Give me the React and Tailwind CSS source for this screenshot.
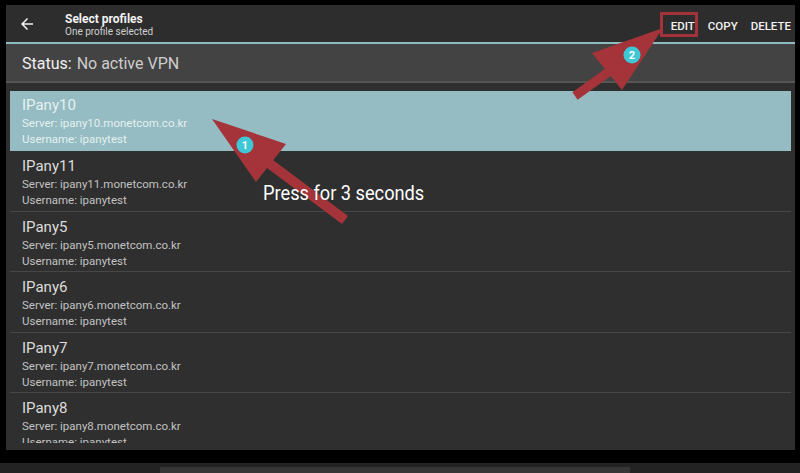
import React from "react";

const items = [
  { name: "IPany10", server: "ipany10.monetcom.co.kr", selected: true },
  { name: "IPany11", server: "ipany11.monetcom.co.kr" },
  { name: "IPany5", server: "ipany5.monetcom.co.kr" },
  { name: "IPany6", server: "ipany6.monetcom.co.kr" },
  { name: "IPany7", server: "ipany7.monetcom.co.kr" },
  { name: "IPany8", server: "ipany8.monetcom.co.kr" },
];

function Item({ it, last }) {
  if (it.selected) {
    return (
      <div className="h-[60px] mx-[4px] bg-[#94bcc2] pl-[12px] pt-[5px] text-[#e6f0f1]">
        <div className="text-[15px] leading-[18px]">{it.name}</div>
        <div className="text-[11.5px] leading-[16px] mt-[1px]">Server: {it.server}</div>
        <div className="text-[11.5px] leading-[16px]">Username: ipanytest</div>
      </div>
    );
  }
  return (
    <div className={"h-[60.5px] mx-[4px] pl-[12px] pt-[6px] " + (last ? "" : "border-b border-[#474747]")}>
      <div className="text-[15px] leading-[18px] text-[#dcdcdc]">{it.name}</div>
      <div className="text-[11.5px] leading-[16px] mt-[1px] text-[#c2c2c2]">Server: {it.server}</div>
      <div className="text-[11.5px] leading-[16px] text-[#c2c2c2]">Username: ipanytest</div>
    </div>
  );
}

export default function App() {
  return (
    <div className="relative w-[800px] h-[473px] bg-black overflow-hidden" style={{ fontFamily: "Roboto, 'Noto Sans', sans-serif" }}>
      <div className="pt-[5px] pl-[6px]">
        <div className="w-[789px] h-[445px] flex flex-col overflow-hidden bg-[#2f2f2f]">
          {/* top bar */}
          <div className="h-[37px] bg-[#2d2d2d] flex items-center shrink-0">
            <svg width="18" height="18" viewBox="0 0 24 24" className="ml-[12px] mt-[1px]" fill="#f2f2f2">
              <path d="M20 11H7.83l5.59-5.59L12 4l-8 8 8 8 1.41-1.41L7.83 13H20v-2z" />
            </svg>
            <div className="ml-[29px] flex flex-col mt-[3px]">
              <span className="text-[12px] leading-[14px] font-bold text-[#f2f2f2]">Select profiles</span>
              <span className="text-[10px] leading-[12px] text-[#cfcfcf]">One profile selected</span>
            </div>
            <div className="ml-auto mr-[4px] flex items-center gap-[13px] text-[11.5px] font-medium text-[#f2f2f2] pt-[6px]">
              <span>EDIT</span>
              <span>COPY</span>
              <span>DELETE</span>
            </div>
          </div>
          <div className="h-[2px] bg-[#8fbcc1] shrink-0" />
          {/* status */}
          <div className="h-[37px] bg-[#434343] flex items-center pl-[16px] pt-[3px] text-[16px] shrink-0">
            <span className="text-[#f0f0f0]">Status:</span>
            <span className="ml-[5px] text-[#cdcdcd]">No active VPN</span>
          </div>
          <div className="h-[2px] bg-[#555555] shrink-0" />
          {/* list */}
          <div className="pt-[8px]">
            <div className="h-[352px] overflow-hidden">
              {items.map((it, i) => (
                <Item key={it.name} it={it} last={i === items.length - 1} />
              ))}
            </div>
          </div>
        </div>
      </div>
      <div className="h-[13px]" />
      <div className="h-[10px] bg-[#232323] pt-[4px]">
        <div className="ml-[160px] w-[470px] h-[6px] bg-[#363636]" />
      </div>

      {/* annotations overlay */}
      <svg className="absolute inset-0 pointer-events-none" width="800" height="473" viewBox="0 0 800 473">
        <rect x="661.5" y="13.5" width="35" height="22" fill="none" stroke="#a3333a" strokeWidth="3" />
        <line x1="250" y1="149" x2="345" y2="220" stroke="#a4343a" strokeWidth="10" />
        <polygon points="212,119 286,144 256,182" fill="#a4343a" />
        <line x1="628" y1="58" x2="575" y2="96" stroke="#a4343a" strokeWidth="9" />
        <polygon points="663,28 592,53 622,90" fill="#a4343a" />
        <circle cx="245" cy="145" r="8.5" fill="#3ec8d6" />
        <text x="245" y="149" textAnchor="middle" fontSize="11" fontWeight="700" fill="#ffffff" fontFamily="Roboto, sans-serif">1</text>
        <circle cx="632" cy="55" r="8.5" fill="#3ec8d6" />
        <text x="632" y="59" textAnchor="middle" fontSize="11" fontWeight="700" fill="#ffffff" fontFamily="Roboto, sans-serif">2</text>
      </svg>
      <div className="absolute left-[263px] top-[181px] text-[20px] leading-[24px] text-white origin-left scale-x-[0.91] whitespace-nowrap">
        Press for 3 seconds
      </div>
    </div>
  );
}
